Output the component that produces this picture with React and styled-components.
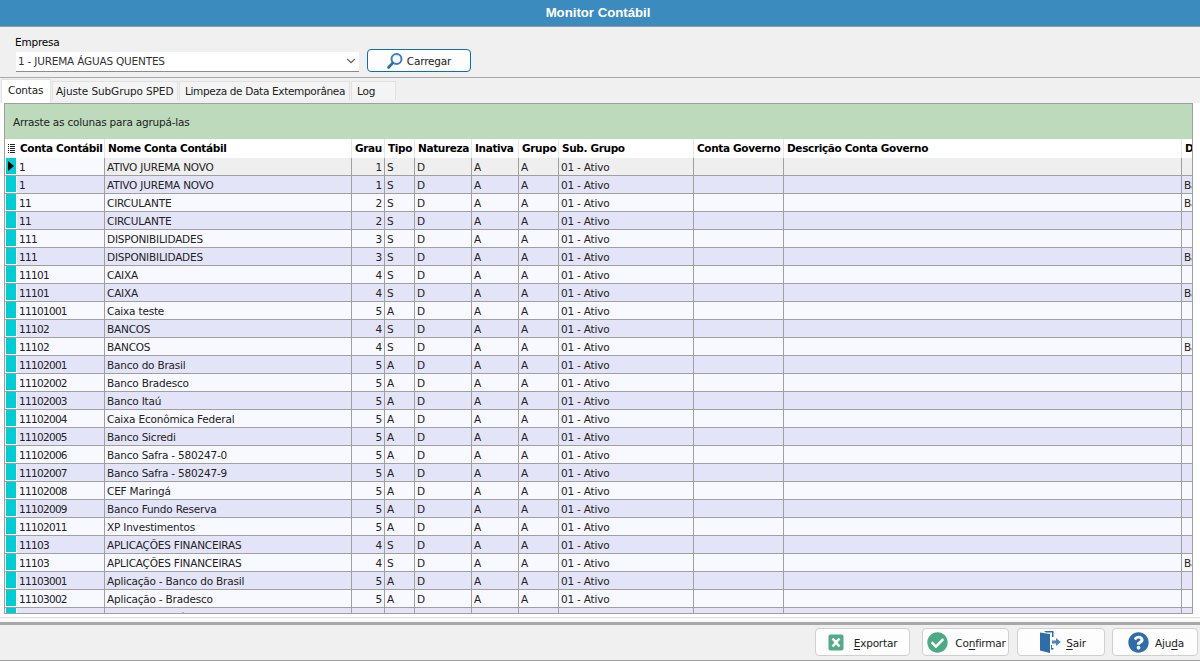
import React from "react";
import styled, { createGlobalStyle } from "styled-components";
import { FaCheckCircle, FaQuestionCircle } from "react-icons/fa";
import { FiChevronDown } from "react-icons/fi";

const Global = createGlobalStyle`
  html, body { margin: 0; padding: 0; height: 100%; overflow: hidden; background: #f0f0f0; }
  #root { height: 100%; }
  * { box-sizing: border-box; }
`;
const FONT = `"DejaVu Sans", Verdana, sans-serif`;

const Page = styled.div`
  width: 1200px; height: 661px; display: flex; flex-direction: column; overflow: hidden;
  background: #f0f0f0; color: #000; font: 10.5px ${FONT}; letter-spacing: -0.2px;
`;
const TitleBar = styled.header`
  flex: 0 0 27px; background: #3b8bbe; border-bottom: 1px solid #9a9a9a;
  display: flex; align-items: center; justify-content: center;
  color: #fff; font: bold 13.2px "Liberation Sans", Arial, sans-serif; padding: 0 4px 1px 0; letter-spacing: 0;
`;
const FilterBar = styled.section`
  flex: 0 0 51px; display: flex; align-items: flex-end; gap: 8px;
  padding: 0 0 5px 16px; border-bottom: 1px solid #a8a8a8;
`;
const Field = styled.div` display: flex; flex-direction: column; gap: 3px; `;
const Label = styled.label` margin-left: -1px; line-height: 13px; `;
const Select = styled.div`
  width: 343px; height: 20px; background: #fff; border-bottom: 1px solid #8c8c8c;
  display: flex; align-items: center; justify-content: space-between; padding: 0 1px 2px 2px;
  color: #333;
`;
const LoadButton = styled.button`
  width: 104px; height: 23px; background: #fdfdfd; border: 1px solid #0b6fb8; border-radius: 4px;
  display: flex; align-items: center; justify-content: center; gap: 3px; padding: 0 1px 0 0;
  font: inherit; letter-spacing: inherit; color: #222;
`;
const Tabs = styled.nav`
  flex: 0 0 25px; display: flex; align-items: flex-end; padding: 0 0 3px 1px; gap: 1px;
`;
const Tab = styled.div`
  height: ${p => (p.$active ? 24 : 19)}px;
  width: ${p => p.$w}px; background: ${p => (p.$active ? "#fff" : "#f4f4f4")};
  border: 1px solid #e2e2e2; border-bottom: none; display: flex; align-items: center;
  padding: 0 0 ${p => (p.$active ? 4 : 1)}px ${p => p.$pad}px;
  color: #222; margin-bottom: ${p => (p.$active ? -3 : 0)}px; ${p => p.$active && "z-index: 1;"}
  letter-spacing: ${p => p.$ls}px; white-space: nowrap;
`;
const Content = styled.div`
  flex: 0 0 515px; background: #fff; padding: 0 7px 0 4px; border-bottom: 1px solid #dcdcdc;
`;
const Shelf = styled.div` flex: 0 0 4px; background: #fafafa; `;
const Grid = styled.div`
  height: 511px; width: 1189px; border: 1px solid #a0a0a0; overflow: hidden; background: #f8f8ff; display: flex; flex-direction: column;
`;
const GroupPanel = styled.div`
  flex: 0 0 35px; background: #bddabd; display: flex; align-items: center; padding: 1px 0 0 8px; color: #222;
`;
const Row = styled.div`
  flex: 0 0 ${p => (p.$head ? 19 : 18)}px; min-height: 0; display: flex; background: ${p => p.$bg};
`;
const Indicator = styled.div`
  width: 12px; flex: none; background: #fff; padding: ${p => (p.$head ? "0" : "0 1px 1px 1px")};
  border-bottom: ${p => (p.$head ? "none" : "1px solid #a0a0a0")}; display: flex; align-items: center; justify-content: center;
`;
const Teal = styled.div` width: 100%; height: 100%; background: #00ccd3; display: flex; align-items: center; justify-content: center; `;
const Cell = styled.div`
  width: ${p => p.$w}px; flex: none; overflow: hidden; white-space: nowrap; color: #222; line-height: 18px; min-height: 0;
  border-right: 1px solid #a0a0a0; border-bottom: 1px solid #a0a0a0;
  padding: 0 ${p => (p.$right ? 2 : 0)}px 0 2px; text-align: ${p => (p.$right ? "right" : "left")};
  ${p => p.$bg && `background: ${p.$bg};`}
  ${p => p.$ls && `letter-spacing: ${p.$ls}px;`}
`;
const HeadCell = styled.div`
  width: ${p => p.$w}px; flex: none; overflow: hidden; white-space: nowrap; font-weight: bold; color: #000; line-height: 19px;
  border-right: 1px solid #e6e6e6; padding-left: 3px; letter-spacing: -0.35px; background: #fff;
`;
const Divider = styled.div` flex: 0 0 3px; background: #a8a8a8; `;
const Footer = styled.footer`
  flex: 1; display: flex; justify-content: flex-end; align-items: flex-start; padding: 3px 2px 0 0; border-bottom: 1px solid #a0a0a0;
`;
const ActionButton = styled.button`
  width: ${p => p.$w}px; margin-left: ${p => p.$gap}px; height: 28px; background: #fdfdfd; border: 1px solid #d0d0d0; border-radius: 4px;
  display: flex; align-items: center; justify-content: center; gap: ${p => p.$g}px; padding: 0 0 0 ${p => p.$pl}px;
  font: inherit; letter-spacing: inherit; color: #222;
  span { padding-top: 2px; }
  u { text-underline-offset: 2px; }
`;

const COLS = [88, 247, 33, 30, 57, 47, 40, 135, 90, 398, 20];
const HEADS = ["Conta Contábil", "Nome Conta Contábil", "Grau", "Tipo", "Natureza", "Inativa", "Grupo", "Sub. Grupo", "Conta Governo", "Descrição Conta Governo", "D"];
const DATA = [
  ["1", "ATIVO JUREMA NOVO", 1, "S", 0], ["1", "ATIVO JUREMA NOVO", 1, "S", 1],
  ["11", "CIRCULANTE", 2, "S", 1], ["11", "CIRCULANTE", 2, "S", 0],
  ["111", "DISPONIBILIDADES", 3, "S", 0], ["111", "DISPONIBILIDADES", 3, "S", 1],
  ["11101", "CAIXA", 4, "S", 0], ["11101", "CAIXA", 4, "S", 1],
  ["11101001", "Caixa teste", 5, "A", 0], ["11102", "BANCOS", 4, "S", 0],
  ["11102", "BANCOS", 4, "S", 1], ["11102001", "Banco do Brasil", 5, "A", 0],
  ["11102002", "Banco Bradesco", 5, "A", 0], ["11102003", "Banco Itaú", 5, "A", 0],
  ["11102004", "Caixa Econômica Federal", 5, "A", 0], ["11102005", "Banco Sicredi", 5, "A", 0],
  ["11102006", "Banco Safra - 580247-0", 5, "A", 0], ["11102007", "Banco Safra - 580247-9", 5, "A", 0],
  ["11102008", "CEF Maringá", 5, "A", 0], ["11102009", "Banco Fundo Reserva", 5, "A", 0],
  ["11102011", "XP Investimentos", 5, "A", 0], ["11103", "APLICAÇÕES FINANCEIRAS", 4, "S", 0],
  ["11103", "APLICAÇÕES FINANCEIRAS", 4, "S", 1], ["11103001", "Aplicação - Banco do Brasil", 5, "A", 0],
  ["11103002", "Aplicação - Bradesco", 5, "A", 0], ["11103003", "Aplicação - Itaú", 5, "A", 0],
];
const rowBg = i => (i === 0 ? "#efefef" : i % 2 ? "#e4e4f8" : "#f8f8ff");

const SearchIcon = () => (
  <svg width="18" height="18" viewBox="0 0 18 18" fill="none">
    <circle cx="10.5" cy="7" r="5" stroke="#3f7fb5" strokeWidth="2" fill="#f2f8fc" />
    <path d="M6.8 10.8 2.5 15.5" stroke="#2b6ea6" strokeWidth="2.6" strokeLinecap="round" />
  </svg>
);
const ExcelIcon = () => (
  <svg width="16" height="17" viewBox="0 0 16 17">
    <rect x="0.5" y="0.5" width="15" height="16" rx="2" fill="#53ab87" />
    <path d="M4.6 4.5 11.4 12.5M11.4 4.5 4.6 12.5" stroke="#fff" strokeWidth="2.6" />
  </svg>
);
const DoorIcon = () => (
  <svg width="21" height="22" viewBox="0 0 21 22">
    <path d="M0 1.5 10 3v19L0 19.5z" fill="#2f6da8" />
    <path d="M4 0h9.5v6h-1.5V1.5H6z" fill="#2f6da8" />
    <path d="M11 14h1v3h1.5v1.5H11z" fill="#2f6da8" />
    <path d="M12 9.5h4V7l4.8 4-4.8 4v-2.5h-4z" fill="#4c83b8" />
  </svg>
);
const ListIcon = () => (
  <svg width="7" height="10" viewBox="0 0 7 10" fill="#222">
    {[0, 2, 4, 6, 8].map(y => (
      <React.Fragment key={y}><rect x="0" y={y} width="1" height="1" /><rect x="2" y={y} width="5" height="1" /></React.Fragment>
    ))}
  </svg>
);
const RowArrow = () => (
  <svg width="6" height="10" viewBox="0 0 6 10"><path d="M0 0 6 5 0 10z" fill="#000" /></svg>
);

export default function App() {
  return (
    <Page>
      <Global />
      <TitleBar>Monitor Contábil</TitleBar>
      <FilterBar>
        <Field>
          <Label>Empresa</Label>
          <Select>1 - JUREMA ÁGUAS QUENTES <FiChevronDown size={14} color="#666" /></Select>
        </Field>
        <LoadButton><SearchIcon />Carregar</LoadButton>
      </FilterBar>
      <Tabs>
        <Tab $active $w={50} $pad={6} $ls={-0.2}>Contas</Tab>
        <Tab $w={126} $pad={3} $ls={-0.1}>Ajuste SubGrupo SPED</Tab>
        <Tab $w={171} $pad={5} $ls={-0.33}>Limpeza de Data Extemporânea</Tab>
        <Tab $w={45} $pad={5} $ls={-0.2}>Log</Tab>
      </Tabs>
      <Content>
        <Grid>
          <GroupPanel>Arraste as colunas para agrupá-las</GroupPanel>
          <Row $head $bg="#fff">
            <Indicator $head><ListIcon /></Indicator>
            {HEADS.map((h, i) => <HeadCell key={h} $w={COLS[i]}>{h}</HeadCell>)}
          </Row>
          {DATA.map((r, i) => (
            <Row key={i} $bg={rowBg(i)}>
              <Indicator><Teal>{i === 0 && <RowArrow />}</Teal></Indicator>
              <Cell $w={COLS[0]} $ls={-0.7} $bg={i === 0 ? "#f8f8ff" : undefined}>{r[0]}</Cell>
              <Cell $w={COLS[1]}>{r[1]}</Cell>
              <Cell $w={COLS[2]} $right>{r[2]}</Cell>
              <Cell $w={COLS[3]}>{r[3]}</Cell>
              <Cell $w={COLS[4]}>D</Cell>
              <Cell $w={COLS[5]}>A</Cell>
              <Cell $w={COLS[6]}>A</Cell>
              <Cell $w={COLS[7]}>01 - Ativo</Cell>
              <Cell $w={COLS[8]} />
              <Cell $w={COLS[9]} />
              <Cell $w={COLS[10]}>{r[4] ? "Ba" : ""}</Cell>
            </Row>
          ))}
        </Grid>
      </Content>
      <Shelf />
      <Divider />
      <Footer>
        <ActionButton $w={95} $gap={0} $g={10} $pl={0}><ExcelIcon /><span><u>E</u>xportar</span></ActionButton>
        <ActionButton $w={87} $gap={12} $g={7} $pl={2}><FaCheckCircle size={21} color="#4caa84" /><span>Co<u>n</u>firmar</span></ActionButton>
        <ActionButton $w={88} $gap={8} $g={5} $pl={4}><DoorIcon /><span><u>S</u>air</span></ActionButton>
        <ActionButton $w={86} $gap={7} $g={6} $pl={2}><FaQuestionCircle size={21} color="#2f6da8" /><span>Aju<u>d</u>a</span></ActionButton>
      </Footer>
    </Page>
  );
}
